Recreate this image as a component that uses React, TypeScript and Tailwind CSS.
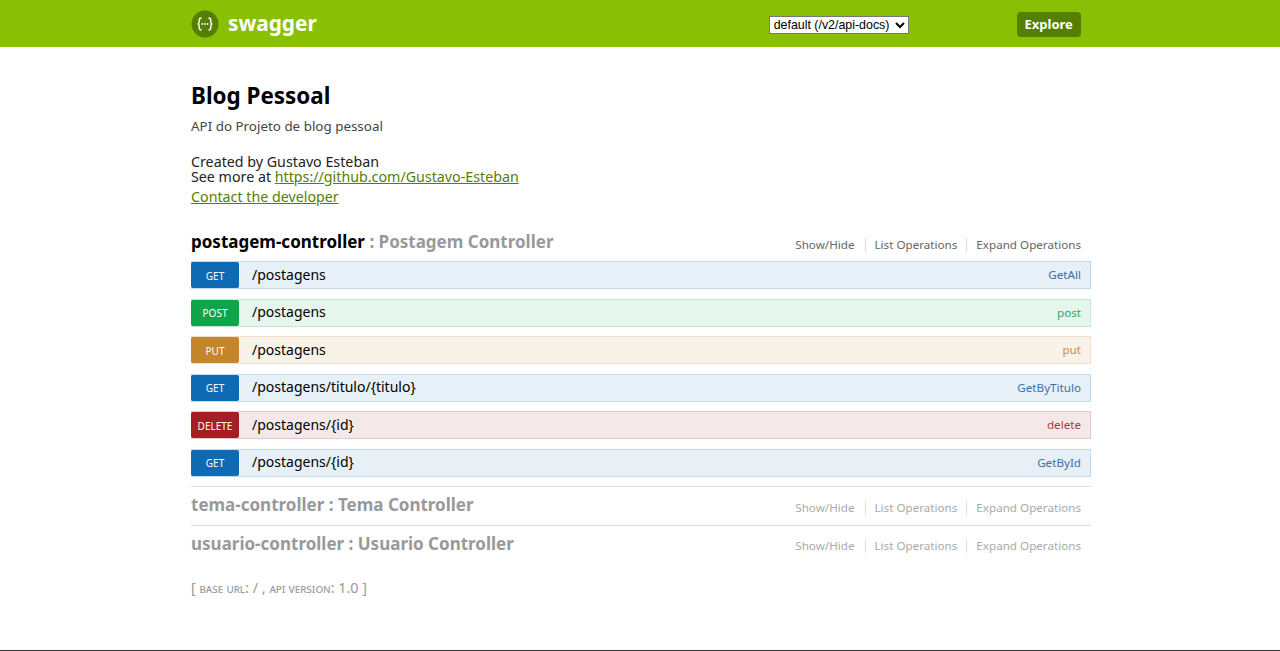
import React from 'react';

const operations = [
  { method: 'GET', path: '/postagens', name: 'GetAll', row: 'bg-[#e7f0f7] border-[#c3d9ec]', badge: 'bg-[#0f6ab4]', text: 'text-[#3b6fa8]' },
  { method: 'POST', path: '/postagens', name: 'post', row: 'bg-[#e7f6ec] border-[#c3e8d1]', badge: 'bg-[#10a54a]', text: 'text-[#2fa85f]' },
  { method: 'PUT', path: '/postagens', name: 'put', row: 'bg-[#f9f2e9] border-[#f0e0ca]', badge: 'bg-[#c5862b]', text: 'text-[#cc8c44]' },
  { method: 'GET', path: '/postagens/titulo/{titulo}', name: 'GetByTitulo', row: 'bg-[#e7f0f7] border-[#c3d9ec]', badge: 'bg-[#0f6ab4]', text: 'text-[#3b6fa8]' },
  { method: 'DELETE', path: '/postagens/{id}', name: 'delete', row: 'bg-[#f5e8e8] border-[#e8c6c7]', badge: 'bg-[#a41e22]', text: 'text-[#a63c3f]' },
  { method: 'GET', path: '/postagens/{id}', name: 'GetById', row: 'bg-[#e7f0f7] border-[#c3d9ec]', badge: 'bg-[#0f6ab4]', text: 'text-[#3b6fa8]' },
];

const SectionLinks = ({ muted, className }: { muted?: boolean; className: string }) => (
  <ul className={`flex items-center text-[11.65px] leading-[14px] ${muted ? 'text-[#aaaaaa]' : 'text-[#666666]'} ${className}`}>
    <li className="pr-[10px] border-r border-[#dddddd]">Show/Hide</li>
    <li className="px-[9px] border-r border-[#dddddd]">List Operations</li>
    <li className="pl-[9px] pr-[10px]">Expand Operations</li>
  </ul>
);

const Logo = () => (
  <svg width="28" height="28" viewBox="0 0 28 28" className="shrink-0">
    <circle cx="14" cy="14" r="13.5" fill="#547f00" />
    <path
      d="M10.5 8c-2 0-2.3 1.1-2.3 2.6v1.5c0 1.1-.5 1.8-1.5 1.9 1 .1 1.5.8 1.5 1.9v1.5c0 1.5.3 2.6 2.3 2.6M17.5 8c2 0 2.3 1.1 2.3 2.6v1.5c0 1.1.5 1.8 1.5 1.9-1 .1-1.5.8-1.5 1.9v1.5c0 1.5-.3 2.6-2.3 2.6"
      fill="none"
      stroke="#ffffff"
      strokeWidth="1.4"
    />
    <circle cx="11.4" cy="14" r="0.9" fill="#ffffff" />
    <circle cx="14" cy="14" r="0.9" fill="#ffffff" />
    <circle cx="16.6" cy="14" r="0.9" fill="#ffffff" />
  </svg>
);

const App: React.FC = () => {
  return (
    <div className="h-[651px] overflow-hidden flex flex-col bg-white font-['Noto_Sans','Open_Sans',sans-serif] text-black">
      <header className="h-[47px] shrink-0 bg-[#89bf04]">
        <div className="w-[900px] ml-[191px] h-full flex items-center">
          <Logo />
          <span className="ml-[9px] text-[20.8px] font-bold text-white leading-none -mt-[1px]">swagger</span>
          <select className="ml-[452px] mt-[2px] w-[140px] h-[18px] bg-white border border-[#777777] text-[12.4px] leading-none text-black font-['Liberation_Sans',sans-serif]">
            <option>default (/v2/api-docs)</option>
          </select>
          <button className="ml-[108px] mt-[2px] w-[64px] h-[25px] rounded-[4px] bg-[#547f00] text-white text-[13px] font-bold leading-none">
            Explore
          </button>
        </div>
      </header>

      <main className="w-[900px] ml-[191px] grow">
        <h1 className="mt-[34px] text-[22.4px] leading-[30px] font-bold">Blog Pessoal</h1>
        <p className="mt-[6px] text-[13.4px] leading-[18px] text-[#444444]">API do Projeto de blog pessoal</p>
        <div className="mt-[19px] text-[14.25px] text-[#222222]">
          <div className="leading-[15px]">Created by Gustavo Esteban</div>
          <div className="leading-[16px]">
            See more at <a className="underline text-[#547f00]">https://github.com/Gustavo-Esteban</a>
          </div>
        </div>
        <a className="block mt-[2px] text-[14.25px] leading-[20px] underline text-[#547f00]">Contact the developer</a>

        <section className="mt-[21px]">
          <div className="h-[28px] flex items-start justify-between">
            <h2 className="text-[17px] leading-[28px] font-bold text-[#999999]">
              <span className="text-black">postagem-controller</span> : Postagem Controller
            </h2>
            <SectionLinks className="pt-[10px]" />
          </div>
          <div className="mt-[5px]">
            {operations.map((op, i) => (
              <div key={i} className={`h-[28px] mb-[9.5px] flex items-center border ${op.row}`}>
                <span className={`-ml-px w-[48px] h-[26px] shrink-0 rounded-[2px] flex items-center justify-center pt-px text-white text-[10px] leading-none ${op.badge}`}>
                  {op.method}
                </span>
                <span className="ml-[13px] pb-[2px] text-[14px] text-black">{op.path}</span>
                <span className={`ml-auto pr-[9px] text-[11.65px] ${op.text}`}>{op.name}</span>
              </div>
            ))}
          </div>
        </section>

        <section className="-mt-[0.5px] border-t border-[#dddddd] h-[39px] flex items-start justify-between">
          <h2 className="text-[17px] font-bold text-[#999999] leading-[36px]">tema-controller : Tema Controller</h2>
          <SectionLinks muted className="pt-[14px]" />
        </section>
        <section className="border-t border-[#dddddd] h-[39px] flex items-start justify-between">
          <h2 className="text-[17px] font-bold text-[#999999] leading-[36px]">usuario-controller : Usuario Controller</h2>
          <SectionLinks muted className="pt-[13px]" />
        </section>

        <div className="mt-[14px] text-[14.3px] leading-[20px] text-[#999999]">
          [ <span className="text-[12.2px] [font-variant-caps:small-caps]">base url</span>: / , <span className="text-[12.2px] [font-variant-caps:small-caps]">api version</span>: 1.0 ]
        </div>
      </main>

      <div className="h-px shrink-0 bg-[#333333]" />
    </div>
  );
};

export default App;
